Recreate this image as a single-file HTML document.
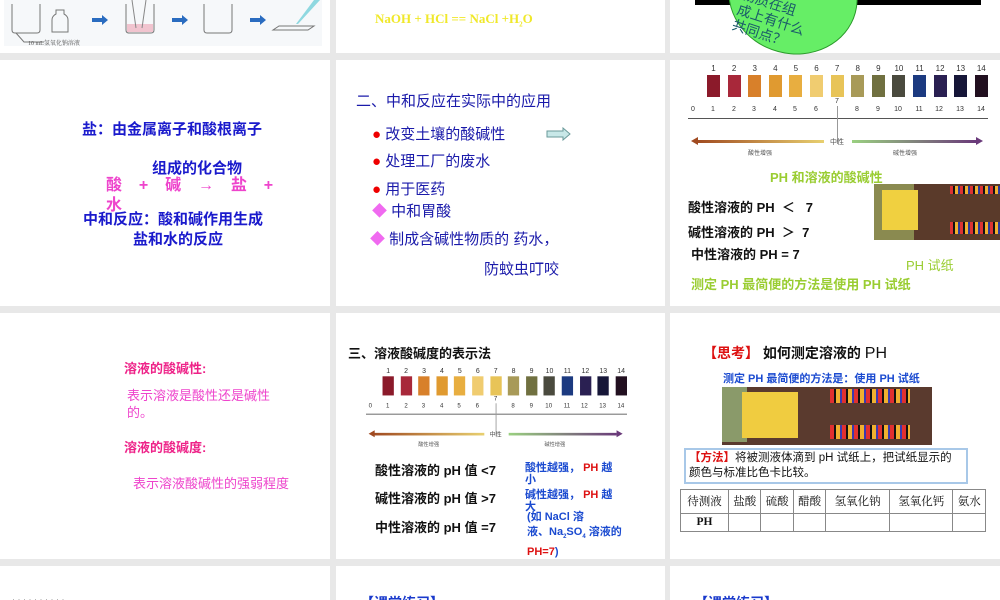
<!DOCTYPE html>
<html><head><meta charset="utf-8">
<style>
*{margin:0;padding:0;box-sizing:border-box}
html,body{width:1000px;height:600px;overflow:hidden}
body{background:#e8e8e8;position:relative;font-family:"Liberation Sans","Noto Sans CJK SC",sans-serif}
.p{position:absolute;background:#fff}
.a{position:absolute;white-space:nowrap}
.chart{position:absolute;width:300px;height:95px;transform-origin:0 0}
.chart .n{position:absolute;top:2px;font-size:8px;color:#333;width:13px;text-align:center}
.chart .s{position:absolute;top:13px;width:13px;height:22px}
.chart .t{position:absolute;top:44px;font-size:7px;color:#333;width:10px;text-align:center}
.b{font-weight:bold}
</style></head><body>
<div class="p" style="left:0;top:0;width:330px;height:53px"></div>
<div class="p" style="left:336px;top:0;width:329px;height:53px"></div>
<div class="p" style="left:670px;top:0;width:330px;height:53px"></div>
<div class="p" style="left:0;top:60px;width:330px;height:246px"></div>
<div class="p" style="left:336px;top:60px;width:329px;height:246px"></div>
<div class="p" style="left:670px;top:60px;width:330px;height:246px"></div>
<div class="p" style="left:0;top:313px;width:330px;height:246px"></div>
<div class="p" style="left:336px;top:313px;width:329px;height:246px"></div>
<div class="p" style="left:670px;top:313px;width:330px;height:246px"></div>
<div class="p" style="left:0;top:566px;width:330px;height:34px"></div>
<div class="p" style="left:336px;top:566px;width:329px;height:34px"></div>
<div class="p" style="left:670px;top:566px;width:330px;height:34px"></div>

<div class="a" style="left:4px;top:0;width:318px;height:46px;background:#f6f8fa"></div>
<svg class="a" style="left:4px;top:0" width="320" height="48" viewBox="0 0 320 48">
<g fill="none" stroke="#777" stroke-width="1">
<path d="M8 4 v26 q0 3 3 3 h22 q3 0 3-3 v-26"/>
<path d="M52 10 h8 v4 q4 2 4 6 v12 h-16 v-12 q0-4 4-6z"/>
<path d="M122 4 v26 q0 3 3 3 h22 q3 0 3-3 v-26"/>
<path d="M200 4 v26 q0 3 3 3 h22 q3 0 3-3 v-26"/>
<path d="M275 26 h35 l-6 4 h-35z"/>
<path d="M12 33 L20 42 h20"/>
</g>
<rect x="123" y="24" width="26" height="8" fill="#f1c4cf"/>
<path d="M128 0 L132 28 M142 0 L138 28" stroke="#888"/>
<path d="M292 24 L310 0 L316 0 L294 24z" fill="#8fd8e0"/>
<g fill="#2a6cc0"><path d="M88 18 h10 v-3 l6 5 -6 5 v-3 h-10z"/><path d="M168 18 h10 v-3 l6 5 -6 5 v-3 h-10z"/><path d="M246 18 h10 v-3 l6 5 -6 5 v-3 h-10z"/></g>
<text x="24" y="45" font-size="6" fill="#555" font-family="Liberation Serif,Noto Serif CJK SC,serif">10 mL氢氧化钠溶液</text>
</svg>

<div class="a b" style="left:375px;top:11px;font-size:13px;color:#f0e82a;font-family:'Liberation Serif',serif">NaOH + HCl == NaCl +H<sub style="font-size:7px">2</sub>O</div>

<div class="a" style="left:695px;top:0;width:286px;height:5px;background:#000"></div>
<div class="a" style="left:728px;top:-62px;width:130px;height:116px;border-radius:50%;background:#66ee66;border:1px solid #2a9a2a;transform:rotate(15deg)"></div>
<div class="a" style="left:745px;top:-14px;font-size:14px;line-height:16px;color:#1a5a6a;transform:rotate(18deg);transform-origin:0 0;white-space:normal;width:90px">物质在组<br>成上有什么<br>共同点？</div>

<div class="a b" style="left:82px;top:118px;font-size:15px;color:#1a1acc">盐：由金属离子和酸根离子</div>
<div class="a b" style="left:152px;top:157px;font-size:15px;color:#1a1acc">组成的化合物</div>
<div class="a b" style="left:106px;top:171px;font-size:16px;color:#ee44cc;word-spacing:4px">酸 &nbsp;+ &nbsp;碱 &nbsp;→ &nbsp;盐 &nbsp;+</div>
<div class="a b" style="left:106px;top:191px;font-size:16px;color:#ee44cc">水</div>
<div class="a b" style="left:83px;top:208px;font-size:15px;color:#1a1acc">中和反应：酸和碱作用生成</div>
<div class="a b" style="left:133px;top:228px;font-size:15px;color:#1a1acc">盐和水的反应</div>

<div class="a" style="left:356px;top:90px;font-size:15px;color:#1a1aaa">二、中和反应在实际中的应用</div>
<div class="a" style="left:372px;top:123px;font-size:15px;color:#1a1aaa"><span style="color:#e00">●</span> 改变土壤的酸碱性</div>
<svg class="a" style="left:546px;top:127px" width="26" height="14"><path d="M1 4 h16 v-3 l7 6 -7 6 v-3 h-16z" fill="#c8e8e8" stroke="#6a9a9a"/></svg>
<div class="a" style="left:372px;top:150px;font-size:15px;color:#1a1aaa"><span style="color:#e00">●</span> 处理工厂的废水</div>
<div class="a" style="left:372px;top:178px;font-size:15px;color:#1a1aaa"><span style="color:#e00">●</span> 用于医药</div>
<div class="a" style="left:372px;top:200px;font-size:15px;color:#1a1aaa"><span style="color:#f06af0">◆</span> 中和胃酸</div>
<div class="a" style="left:370px;top:228px;font-size:15px;color:#1a1aaa"><span style="color:#f06af0">◆</span> 制成含碱性物质的 药水，</div>
<div class="a" style="left:484px;top:258px;font-size:15px;color:#1a1aaa">防蚊虫叮咬</div>

<div class="chart" style="left:688px;top:62px">
 <div class="n" style="left:19px">1</div><div class="n" style="left:39.6px">2</div><div class="n" style="left:60.2px">3</div><div class="n" style="left:80.8px">4</div><div class="n" style="left:101.4px">5</div><div class="n" style="left:122px">6</div><div class="n" style="left:142.6px">7</div><div class="n" style="left:163.2px">8</div><div class="n" style="left:183.8px">9</div><div class="n" style="left:204.4px">10</div><div class="n" style="left:225px">11</div><div class="n" style="left:245.6px">12</div><div class="n" style="left:266.2px">13</div><div class="n" style="left:286.8px">14</div>
 <div class="s" style="left:19px;background:#8b1a2a"></div><div class="s" style="left:39.6px;background:#a8283a"></div><div class="s" style="left:60.2px;background:#d8802a"></div><div class="s" style="left:80.8px;background:#e09a30"></div><div class="s" style="left:101.4px;background:#e8ae40"></div><div class="s" style="left:122px;background:#f0cc70"></div><div class="s" style="left:142.6px;background:#e8c458"></div><div class="s" style="left:163.2px;background:#a89a58"></div><div class="s" style="left:183.8px;background:#707040"></div><div class="s" style="left:204.4px;background:#4a4a3e"></div><div class="s" style="left:225px;background:#1c3a80"></div><div class="s" style="left:245.6px;background:#2a2052"></div><div class="s" style="left:266.2px;background:#161638"></div><div class="s" style="left:286.8px;background:#221020"></div>
 <div class="t" style="left:0">0</div><div class="t" style="left:20px">1</div><div class="t" style="left:41px">2</div><div class="t" style="left:61px">3</div><div class="t" style="left:82px">4</div><div class="t" style="left:102px">5</div><div class="t" style="left:123px">6</div><div class="t" style="left:144px;top:36px">7</div><div class="t" style="left:164px">8</div><div class="t" style="left:185px">9</div><div class="t" style="left:205px">10</div><div class="t" style="left:226px">11</div><div class="t" style="left:246px">12</div><div class="t" style="left:267px">13</div><div class="t" style="left:288px">14</div>
 <div style="position:absolute;left:0;top:56px;width:300px;height:1px;background:#555"></div>
 <div style="position:absolute;left:149px;top:44px;width:1px;height:38px;background:#999"></div>
 <div style="position:absolute;left:8px;top:78px;width:128px;height:3px;background:linear-gradient(90deg,#a04a20,#e8d070)"></div>
 <div style="position:absolute;left:3px;top:75px;border-right:7px solid #a04a20;border-top:4px solid transparent;border-bottom:4px solid transparent"></div>
 <div style="position:absolute;left:164px;top:78px;width:124px;height:3px;background:linear-gradient(90deg,#9ad080,#6a3a7a)"></div>
 <div style="position:absolute;left:288px;top:75px;border-left:7px solid #6a3a7a;border-top:4px solid transparent;border-bottom:4px solid transparent"></div>
 <div style="position:absolute;left:142px;top:75px;font-size:7px;color:#555">中性</div>
 <div style="position:absolute;left:60px;top:86px;font-size:6px;color:#555">酸性增强</div>
 <div style="position:absolute;left:205px;top:86px;font-size:6px;color:#555">碱性增强</div>
</div>
<div class="a b" style="left:770px;top:167px;font-size:13px;color:#9acd32">PH 和溶液的酸碱性</div>
<div class="a b" style="left:688px;top:197px;font-size:13px;color:#111">酸性溶液的 PH &nbsp;＜ &nbsp; 7</div>
<div class="a b" style="left:688px;top:222px;font-size:13px;color:#111">碱性溶液的 PH &nbsp;＞ &nbsp;7</div>
<div class="a b" style="left:691px;top:244px;font-size:13px;color:#111">中性溶液的 PH = 7</div>
<div class="a" style="left:874px;top:184px;width:126px;height:56px;background:#5a3a2a"></div>
<div class="a" style="left:874px;top:184px;width:40px;height:56px;background:#8a8a50"></div>
<div class="a" style="left:882px;top:190px;width:36px;height:40px;background:#f0d040"></div>
<div class="a" style="left:950px;top:186px;width:50px;height:8px;background:repeating-linear-gradient(90deg,#d33 0 3px,#111 3px 5px,#f0b030 5px 8px,#2a3aa0 8px 10px)"></div>
<div class="a" style="left:950px;top:222px;width:50px;height:12px;background:repeating-linear-gradient(90deg,#d33 0 3px,#111 3px 5px,#f0b030 5px 8px,#2a3aa0 8px 10px)"></div>
<div class="a" style="left:906px;top:255px;font-size:13px;color:#9acd32">PH 试纸</div>
<div class="a b" style="left:691px;top:274px;font-size:13px;color:#9acd32">测定 PH 最简便的方法是使用 PH 试纸</div>

<div class="a b" style="left:124px;top:358px;font-size:13px;color:#ee2288">溶液的酸碱性:</div>
<div class="a" style="left:127px;top:387px;font-size:13px;line-height:17px;color:#ee44cc">表示溶液是酸性还是碱性<br>的。</div>
<div class="a b" style="left:124px;top:437px;font-size:13px;color:#ee2288">溶液的酸碱度:</div>
<div class="a" style="left:133px;top:473px;font-size:13px;color:#ee44cc">表示溶液酸碱性的强弱程度</div>

<div class="a b" style="left:348px;top:343px;font-size:13px;color:#111">三、溶液酸碱度的表示法</div>
<div class="chart" style="left:366px;top:365px;transform:scale(.87)">
 <div class="n" style="left:19px">1</div><div class="n" style="left:39.6px">2</div><div class="n" style="left:60.2px">3</div><div class="n" style="left:80.8px">4</div><div class="n" style="left:101.4px">5</div><div class="n" style="left:122px">6</div><div class="n" style="left:142.6px">7</div><div class="n" style="left:163.2px">8</div><div class="n" style="left:183.8px">9</div><div class="n" style="left:204.4px">10</div><div class="n" style="left:225px">11</div><div class="n" style="left:245.6px">12</div><div class="n" style="left:266.2px">13</div><div class="n" style="left:286.8px">14</div>
 <div class="s" style="left:19px;background:#8b1a2a"></div><div class="s" style="left:39.6px;background:#a8283a"></div><div class="s" style="left:60.2px;background:#d8802a"></div><div class="s" style="left:80.8px;background:#e09a30"></div><div class="s" style="left:101.4px;background:#e8ae40"></div><div class="s" style="left:122px;background:#f0cc70"></div><div class="s" style="left:142.6px;background:#e8c458"></div><div class="s" style="left:163.2px;background:#a89a58"></div><div class="s" style="left:183.8px;background:#707040"></div><div class="s" style="left:204.4px;background:#4a4a3e"></div><div class="s" style="left:225px;background:#1c3a80"></div><div class="s" style="left:245.6px;background:#2a2052"></div><div class="s" style="left:266.2px;background:#161638"></div><div class="s" style="left:286.8px;background:#221020"></div>
 <div class="t" style="left:0">0</div><div class="t" style="left:20px">1</div><div class="t" style="left:41px">2</div><div class="t" style="left:61px">3</div><div class="t" style="left:82px">4</div><div class="t" style="left:102px">5</div><div class="t" style="left:123px">6</div><div class="t" style="left:144px;top:36px">7</div><div class="t" style="left:164px">8</div><div class="t" style="left:185px">9</div><div class="t" style="left:205px">10</div><div class="t" style="left:226px">11</div><div class="t" style="left:246px">12</div><div class="t" style="left:267px">13</div><div class="t" style="left:288px">14</div>
 <div style="position:absolute;left:0;top:56px;width:300px;height:1px;background:#555"></div>
 <div style="position:absolute;left:149px;top:44px;width:1px;height:38px;background:#999"></div>
 <div style="position:absolute;left:8px;top:78px;width:128px;height:3px;background:linear-gradient(90deg,#a04a20,#e8d070)"></div>
 <div style="position:absolute;left:3px;top:75px;border-right:7px solid #a04a20;border-top:4px solid transparent;border-bottom:4px solid transparent"></div>
 <div style="position:absolute;left:164px;top:78px;width:124px;height:3px;background:linear-gradient(90deg,#9ad080,#6a3a7a)"></div>
 <div style="position:absolute;left:288px;top:75px;border-left:7px solid #6a3a7a;border-top:4px solid transparent;border-bottom:4px solid transparent"></div>
 <div style="position:absolute;left:142px;top:75px;font-size:7px;color:#555">中性</div>
 <div style="position:absolute;left:60px;top:86px;font-size:6px;color:#555">酸性增强</div>
 <div style="position:absolute;left:205px;top:86px;font-size:6px;color:#555">碱性增强</div>
</div>
<div class="a b" style="left:375px;top:460px;font-size:13px;color:#111">酸性溶液的 pH 值 &lt;7</div>
<div class="a b" style="left:375px;top:488px;font-size:13px;color:#111">碱性溶液的 pH 值 &gt;7</div>
<div class="a b" style="left:375px;top:517px;font-size:13px;color:#111">中性溶液的 pH 值 =7</div>
<div class="a b" style="left:525px;top:462px;font-size:11px;line-height:12px;color:#1a4ad0">酸性越强， <span style="color:#dd1111">PH</span> 越<br>小</div>
<div class="a b" style="left:525px;top:489px;font-size:11px;line-height:12px;color:#1a4ad0">碱性越强， <span style="color:#dd1111">PH</span> 越<br>大</div>
<div class="a b" style="left:527px;top:510px;font-size:11px;line-height:15px;color:#1a4ad0">(如 NaCl 溶<br>液、Na<sub style="font-size:6px">2</sub>SO<sub style="font-size:6px">4</sub> 溶液的<br><span style="color:#dd1111">PH=7</span>)</div>

<div class="a b" style="left:703px;top:343px;font-size:14px;color:#111"><span style="color:#dd1111">【思考】</span> 如何测定溶液的 <span style="font-weight:normal;font-size:16px">PH</span></div>
<div class="a b" style="left:723px;top:370px;font-size:11px;color:#1a4ad0">测定 PH 最简便的方法是：使用 PH 试纸</div>
<div class="a" style="left:722px;top:387px;width:210px;height:58px;background:#5a3a2e"></div>
<div class="a" style="left:722px;top:387px;width:25px;height:55px;background:#8a9a6a"></div>
<div class="a" style="left:742px;top:392px;width:56px;height:46px;background:#f0cc40"></div>
<div class="a" style="left:830px;top:389px;width:80px;height:14px;background:repeating-linear-gradient(90deg,#e03030 0 4px,#111 4px 6px,#f0b030 6px 10px,#3a3ab0 10px 12px)"></div>
<div class="a" style="left:830px;top:425px;width:80px;height:14px;background:repeating-linear-gradient(90deg,#e03030 0 4px,#111 4px 6px,#f0b030 6px 10px,#3a3ab0 10px 12px)"></div>
<div class="a" style="left:684px;top:448px;width:284px;height:36px;border:2px solid #a8c8e8;background:#fff;font-size:11.5px;line-height:15px;color:#111;padding:1px 3px;white-space:normal"><span style="color:#dd1111;font-weight:bold">【方法】</span>将被测液体滴到 pH 试纸上，把试纸显示的颜色与标准比色卡比较。</div>
<table class="a" style="left:680px;top:489px;width:306px;height:43px;border-collapse:collapse;font-size:11.5px;font-family:'Liberation Serif','Noto Serif CJK SC',serif;color:#111">
<tr><td style="border:1px solid #888;text-align:center">待测液</td><td style="border:1px solid #888;text-align:center">盐酸</td><td style="border:1px solid #888;text-align:center">硫酸</td><td style="border:1px solid #888;text-align:center">醋酸</td><td style="border:1px solid #888;text-align:center">氢氧化钠</td><td style="border:1px solid #888;text-align:center">氢氧化钙</td><td style="border:1px solid #888;text-align:center">氨水</td></tr>
<tr><td style="border:1px solid #888;text-align:center;font-weight:bold">PH</td><td style="border:1px solid #888"></td><td style="border:1px solid #888"></td><td style="border:1px solid #888"></td><td style="border:1px solid #888"></td><td style="border:1px solid #888"></td><td style="border:1px solid #888"></td></tr>
</table>

<div class="a" style="left:12px;top:594px;font-size:9px;color:#aaa">· · · · · · · · · ·</div>
<div class="a b" style="left:360px;top:593px;font-size:14px;color:#1a3acc">【课堂练习】</div>
<div class="a b" style="left:694px;top:593px;font-size:14px;color:#1a3acc">【课堂练习】</div>
</body></html>
